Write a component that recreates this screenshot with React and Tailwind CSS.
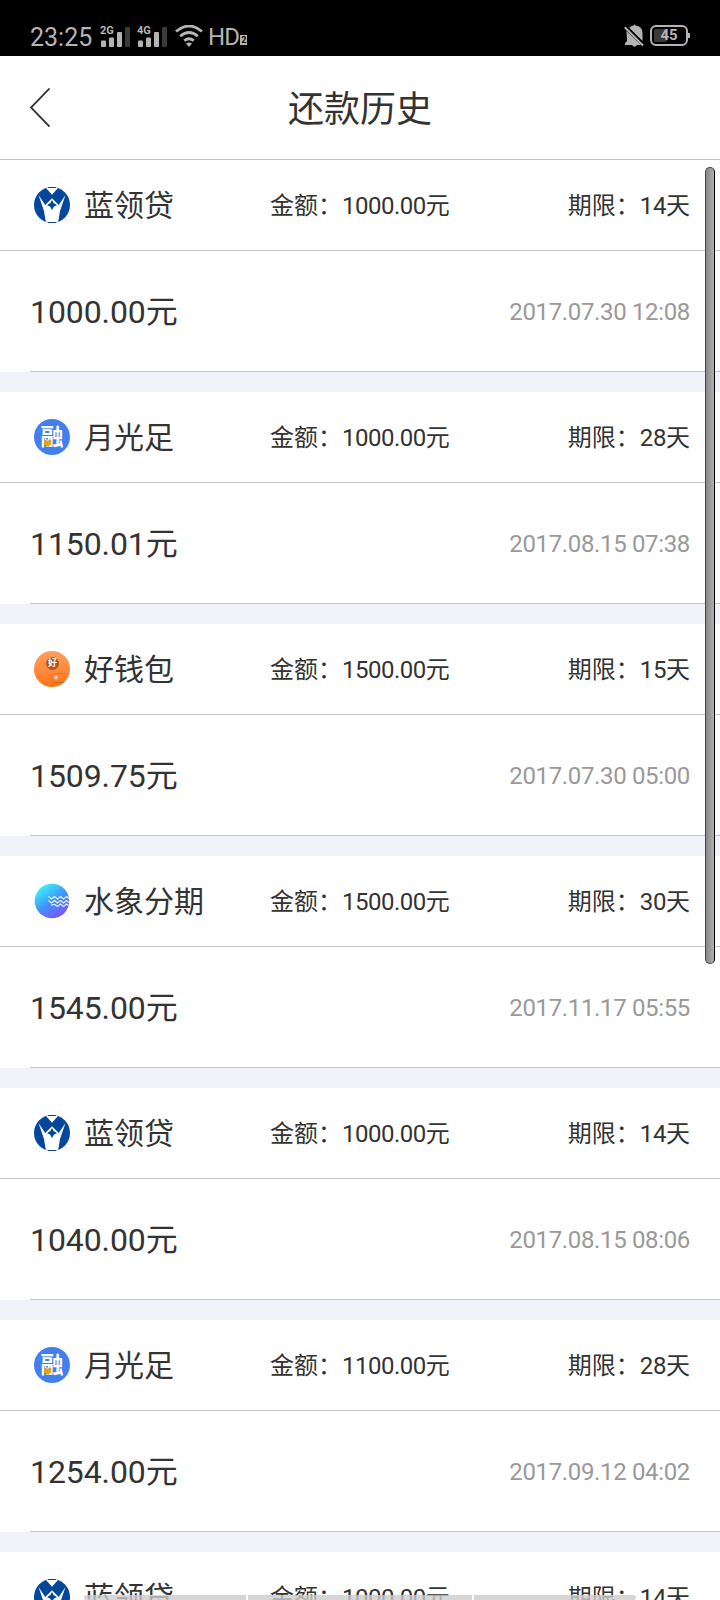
const records = [
  { brand: 'lanling', name: '蓝领贷', amount: '1000.00', term: 14, repaid: '1000.00', date: '2017.07.30 12:08' },
  { brand: 'yueguang', name: '月光足', amount: '1000.00', term: 28, repaid: '1150.01', date: '2017.08.15 07:38' },
  { brand: 'qianbao', name: '好钱包', amount: '1500.00', term: 15, repaid: '1509.75', date: '2017.07.30 05:00' },
  { brand: 'shuixiang', name: '水象分期', amount: '1500.00', term: 30, repaid: '1545.00', date: '2017.11.17 05:55' },
  { brand: 'lanling', name: '蓝领贷', amount: '1000.00', term: 14, repaid: '1040.00', date: '2017.08.15 08:06' },
  { brand: 'yueguang', name: '月光足', amount: '1100.00', term: 28, repaid: '1254.00', date: '2017.09.12 04:02' },
  { brand: 'lanling', name: '蓝领贷', amount: '1000.00', term: 14, repaid: '1000.00', date: '2017.09.12 04:02' },
]

function BrandLogo({ brand }) {
  if (brand === 'lanling') {
    return (
      <svg className="w-9 h-9 shrink-0" viewBox="0 0 36 36">
        <circle cx="18" cy="18" r="18" fill="#04479b" />
        <path d="M12 1 18 7.800 24 1Q18-.8 12 1z" fill="#fff" />
        <path d="M14 .5h8" stroke="#04479b" />
        <path
          d="M4.500 8 11.200 18 18 11.300 24.800 18 31.500 8 26 24 24.200 34.800Q18 37 11.800 34.800L10 24z"
          fill="#fff"
        />
        <path d="M18 13 19.800 16.200 23 18 19.800 19.800 18 23 16.200 19.800 13 18 16.200 16.200z" fill="#04479b" />
        <path d="M14 35.500h8" stroke="#04479b" />
      </svg>
    )
  }

  if (brand === 'yueguang') {
    return (
      <div className="relative w-9 h-9 shrink-0 rounded-full bg-[#437fea] text-white text-[23px] leading-[37px] font-bold text-center">
        融
        <svg className="absolute left-2.5 top-[21px] w-[7px] h-[7px]" viewBox="0 0 7 7">
          <path d="M0 0h2l1.500 1L5 0h2v5H5v1.500H2V5H0z" fill="#dda322" />
        </svg>
      </div>
    )
  }

  if (brand === 'qianbao') {
    return (
      <div className="relative w-9 h-9 shrink-0 rounded-full bg-linear-to-b from-[#ffa05c] to-[#fb7411]">
        <span className="absolute left-3 top-[6px] w-[13px] h-[13px] rounded-full bg-[#b4561d] text-white text-[9px] leading-[13px] font-bold text-center">
          好
        </span>
        <svg className="absolute inset-0" viewBox="0 0 36 36" fill="none">
          <path d="M34 22.500H20q-2 0-2 2V29q0 2 2 2h10" stroke="#ec6f1c" strokeWidth=".6" />
          <circle cx="22" cy="26.500" r="2.100" fill="#e3c3ae" />
          <path d="M19.500 31.500H30" stroke="#cf5f1a" strokeWidth=".8" />
        </svg>
      </div>
    )
  }

  return (
    <svg className="w-9 h-9 shrink-0" viewBox="0 0 36 36" fill="none">
      <defs>
        <linearGradient id="wave-bg" x1="8" y1="3" x2="29" y2="33" gradientUnits="userSpaceOnUse">
          <stop stopColor="#3ef0f5" />
          <stop offset=".5" stopColor="#3e94fb" />
          <stop offset="1" stopColor="#8050fb" />
        </linearGradient>
      </defs>
      <circle cx="18" cy="18" r="17.300" fill="url(#wave-bg)" />
      <g stroke="#e0f4ff" strokeWidth="1.200">
        <path d="M14.500 13.500l3 2.500 3-2.500 3 2.500 3-2.500 3 2.500 3-2.500 2.500 2" />
        <path d="M14.500 17.500l3 2.500 3-2.500 3 2.500 3-2.500 3 2.500 3-2.500 2.500 2" />
        <path d="M17 22l3.500-.5 3 2 3-2.500 3 2.500 3-2.500 2 1.500" />
      </g>
    </svg>
  )
}

function Signal({ label }) {
  return (
    <div className="relative w-[30px] h-5 mr-[7px]">
      <span className="absolute -left-px -top-0.5 text-[11px] leading-[12px] font-bold">{label}</span>
      <svg className="w-[30px] h-5" viewBox="0 0 30 20" fill="currentColor">
        <rect x="0" y="13.500" width="5" height="6.500" rx="1" />
        <rect x="8" y="10.500" width="5" height="9.500" rx="1" />
        <rect x="16" y="5" width="5" height="15" rx="1" />
        <rect x="24" y="0" width="5" height="20" rx="1" fill="#3a3a3a" />
      </svg>
    </div>
  )
}

function StatusBar() {
  return (
    <div className="flex items-end h-14 pl-[30px] pr-8 pb-[9px] bg-black text-[#b4b4b4]">
      <span className="w-[71px] h-[22px] text-[25px] leading-[25px]">23:25</span>
      <div className="flex items-end h-[21px]">
        <Signal label="2G" />
        <Signal label="4G" />
        <svg className="w-7 h-[22px]" viewBox="0 0 28 22" fill="none" stroke="currentColor" strokeWidth="2.800">
          <path d="M1 6.500Q14-4.500 27 6.500" />
          <path d="M5.200 11.200Q14 3.800 22.800 11.200" />
          <path d="M9.200 15.700Q14 11.800 18.800 15.700" />
          <path d="M11 18.500Q14 16.500 17 18.500L14 22z" fill="currentColor" stroke="none" />
        </svg>
      </div>
      <span className="ml-[5px] h-[22px] text-[24px] leading-[25px] tracking-[-0.8px]">HD</span>
      <span className="ml-px mb-0.5 w-[7px] h-[10px] bg-[#b4b4b4] text-black text-[9px] leading-[10px] font-bold text-center">
        2
      </span>
      <svg className="ml-auto w-5 h-6 -mb-px" viewBox="0 0 20 24" fill="currentColor">
        <path d="M5.500 3.500Q7.500 1.500 9.500 1.500q1-2 2 0Q18.500 2.500 18.500 9v9L5 4z" />
        <path d="M2.500 7 17 21h-4q-2.500 3.500-5 0H1v-2l2-2z" />
        <path d="M.8 3.200 19 21.500" stroke="currentColor" strokeWidth="2" />
        <path d="M2.200 1.800 20 19.500" stroke="#000" strokeWidth="1.300" />
      </svg>
      <div className="relative flex items-center justify-center ml-1.5 mb-px w-[38px] h-[21px] rounded-md border-2 border-[#b4b4b4] text-[15px] leading-none font-bold">
        <span className="absolute left-0.5 top-0.5 w-[13px] h-[13px] rounded-xs bg-[#3a3a3a]" />
        <span className="relative">45</span>
        <span className="absolute -right-1 top-1.5 w-0.5 h-[5px] bg-[#b4b4b4]" />
      </div>
    </div>
  )
}

function Header() {
  return (
    <header className="relative flex items-center justify-center h-[104px] pt-1 border-b border-[#c4c4c6]">
      <svg
        className="absolute left-[30px] top-8 w-5 h-10"
        viewBox="0 0 20 40"
        fill="none"
        stroke="#333"
        strokeWidth="1.800"
      >
        <path d="M19.500.5 1 19.500l18.500 19" />
      </svg>
      <h1 className="text-[36px] leading-none">还款历史</h1>
    </header>
  )
}

function RecordCard({ record }) {
  return (
    <section className="h-[232px] bg-[#f2f3f8] shrink-0">
      <div className="flex items-center h-[91px] pl-[34px] pr-[30px] bg-white border-b border-[#c8c8ca] text-2xl">
        <div className="flex items-center w-[236px] gap-3.5">
          <BrandLogo brand={record.brand} />
          <span className="mt-0.5 text-[30px] leading-9">{record.name}</span>
        </div>
        <span className="mt-0.5">
          金额：<span className="tracking-[-0.5px]">{record.amount}</span>元
        </span>
        <span className="mt-0.5 ml-auto">
          期限：<span className="tracking-[-0.4px]">{record.term}</span>天
        </span>
      </div>
      <div className="h-[121px] pl-[30px] bg-white">
        <div className="flex items-center justify-between h-full pt-0.5 pr-[30px] border-b border-[#c5c6cc]">
          <span className="text-[32px] tracking-[-0.1px]">{record.repaid}元</span>
          <span className="text-2xl tracking-[-0.35px] text-[#999]">{record.date}</span>
        </div>
      </div>
    </section>
  )
}

export default function App() {
  return (
    <div className="relative flex flex-col w-[720px] h-[1600px] overflow-hidden bg-white text-[#333] font-[Roboto,'Noto_Sans_CJK_SC',sans-serif]">
      <StatusBar />
      <Header />
      <main className="flex-1 min-h-0 overflow-hidden">
        {records.map((record, index) => (
          <RecordCard key={index} record={record} />
        ))}
      </main>

      {/* scroll thumb */}
      <div className="absolute right-[5px] top-[167px] w-[10px] h-[797px] rounded-full border border-[#444] border-r-black bg-linear-to-r from-[#888] to-[#b0b0b0]" />

      {/* gesture hints */}
      <div className="absolute left-[84px] bottom-0 flex gap-0.5 w-[552px] h-[5px] opacity-80">
        <span className="w-[162px] rounded-l-full bg-[#ccc]" />
        <span className="w-[224px] bg-[#ccc]" />
        <span className="flex-1 rounded-r-full bg-[#ccc]" />
      </div>
    </div>
  )
}
